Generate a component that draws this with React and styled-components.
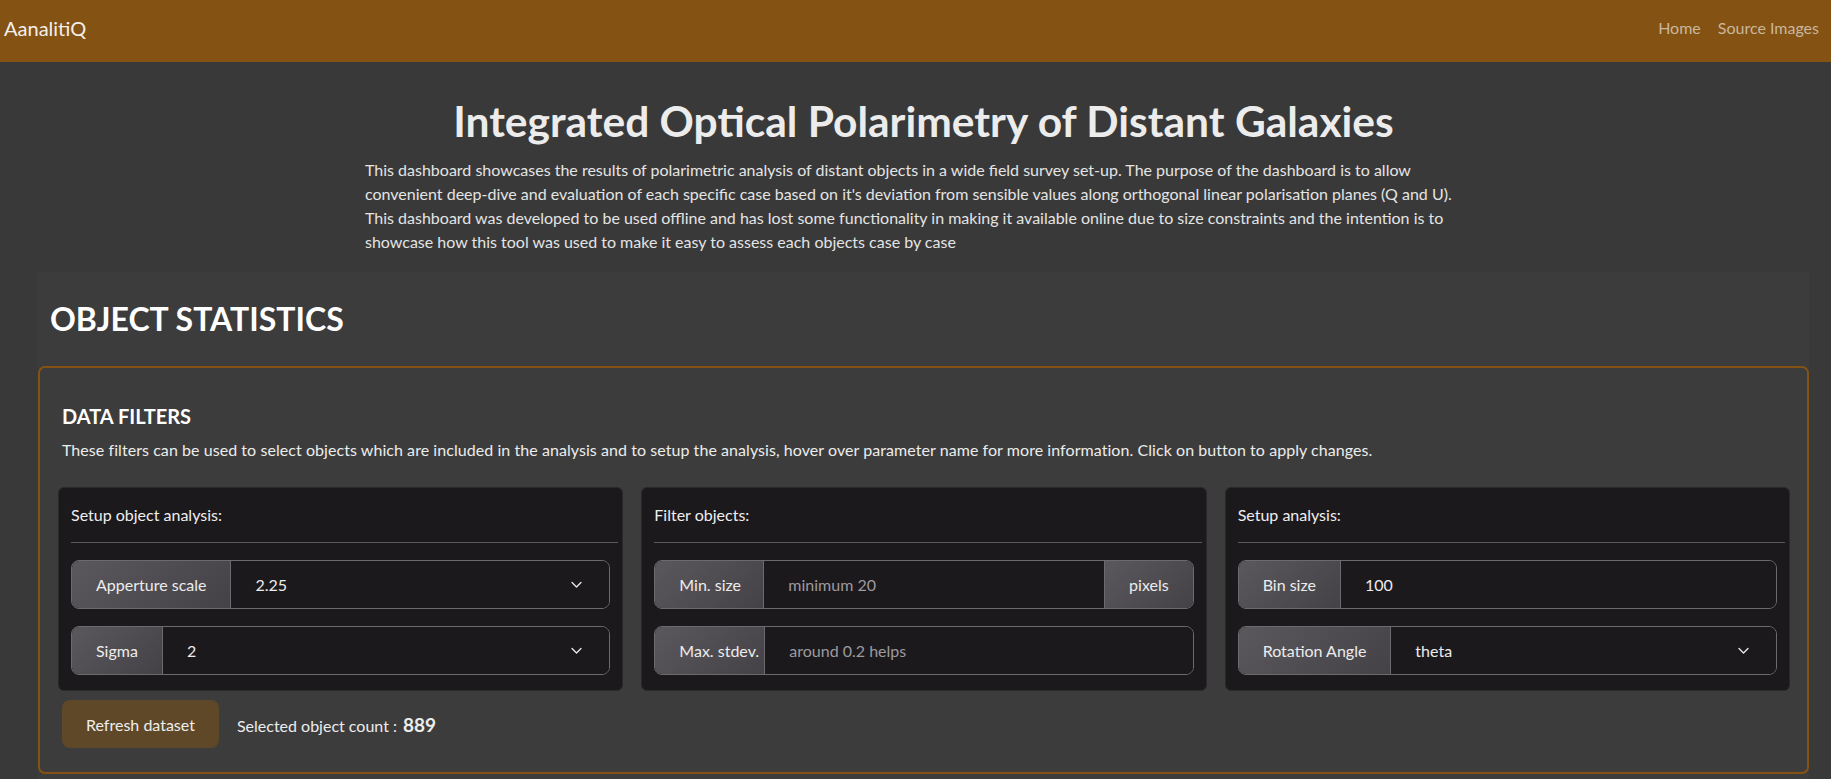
import styled, { createGlobalStyle } from 'styled-components'

const GlobalStyle = createGlobalStyle`
  body {
    margin: 0;
    background-color: #393939;
    color: #e9e9e9;
    font-family: Lato, "Liberation Sans", sans-serif;
  }
`

const Navbar = styled.nav`
  height: 62px;
  box-sizing: border-box;
  background-color: #845213;
  display: flex;
  align-items: center;
  justify-content: space-between;
  padding: 0 12px 7px 4px;
`

const Brand = styled.div`
  font-size: 20px;
  color: #f3f0ea;
`

const NavLinks = styled.div`
  display: flex;
  gap: 17px;
`

const NavLink = styled.a`
  font-size: 16px;
  color: #c9b79e;
  text-decoration: none;
`

const Main = styled.main`
  padding: 0 22px 0 38px;
`

const Title = styled.h1`
  margin: 35px 0 13px;
  font-size: 42.5px;
  line-height: 48px;
  font-weight: 700;
  text-align: center;
  color: #ececec;
`

const Intro = styled.p`
  margin: 0 0 18px 327px;
  font-size: 16px;
  line-height: 24px;
  color: #e4e4e4;
  white-space: nowrap;
`

const Section = styled.section`
  background-color: #3c3c3c;
  padding: 28px 0 20px;
`

const SectionTitle = styled.h2`
  margin: 0 0 28px;
  padding-left: 12px;
  font-size: 32px;
  line-height: 38px;
  font-weight: 700;
  color: #fff;
`

const FilterBox = styled.div`
  border: 2px solid #845213;
  border-radius: 7px;
  padding: 36px 17px 24px 18px;
`

const BoxTitle = styled.h5`
  margin: 0 0 10px 4px;
  font-size: 20px;
  line-height: 24px;
  font-weight: 700;
  color: #fff;
`

const BoxText = styled.p`
  margin: 0 0 25px 4px;
  font-size: 16px;
  line-height: 24px;
  letter-spacing: 0.06px;
  color: #ececec;
`

const CardRow = styled.div`
  display: grid;
  grid-template-columns: repeat(3, 1fr);
  gap: 18px;
`

const Card = styled.div`
  background-color: #1c191d;
  border: 1px solid #2b282c;
  border-radius: 6px;
  padding: 15px 12px 15px 12px;
`

const CardHeader = styled.div`
  font-size: 16px;
  line-height: 24px;
  color: #eeeeee;
  padding-bottom: 15px;
  margin-right: -8px;
  border-bottom: 1px solid #5a575b;
  margin-bottom: 17px;
`

const Group = styled.div`
  display: flex;
  height: 49px;
  box-sizing: border-box;
  border: 1px solid #6d6a6e;
  border-radius: 8px;
  overflow: hidden;
  & + & {
    margin-top: 17px;
  }
`

const Addon = styled.div`
  display: flex;
  align-items: center;
  flex-shrink: 0;
  box-sizing: border-box;
  width: ${({ $width }) => ($width ? `${$width}px` : 'auto')};
  padding: ${({ $width }) => ($width ? '0 0 0 24px' : '0 24px')};
  font-size: 16px;
  color: #ececec;
  background: linear-gradient(135deg, #5b585d, #454247);
  border-left: ${({ $end }) => ($end ? '1px solid #6d6a6e' : 'none')};
  border-right: ${({ $end }) => ($end ? 'none' : '1px solid #6d6a6e')};
  white-space: nowrap;
`

const Field = styled.div`
  flex: 1;
  display: flex;
  align-items: center;
  justify-content: space-between;
  padding: 0 26px 0 24px;
  font-size: 16px;
  color: ${({ $placeholder }) => ($placeholder ? '#9c9a9d' : '#ececec')};
  background-color: #1c191d;
`

const Chevron = () => (
  <svg width="13" height="13" viewBox="0 0 16 16" fill="none">
    <path d="M2.5 5.5l5.5 5.5 5.5-5.5" stroke="#e6e6e6" strokeWidth="1.7" strokeLinecap="round" strokeLinejoin="round" />
  </svg>
)

const Footer = styled.div`
  display: flex;
  align-items: center;
  gap: 18px;
  margin: 9px 0 0 4px;
`

const RefreshButton = styled.button`
  height: 48px;
  padding: 0 24px;
  border: none;
  border-radius: 8px;
  background-color: #5f4828;
  color: #eeeeee;
  font-family: inherit;
  font-size: 16px;
  cursor: pointer;
`

const Count = styled.span`
  font-size: 16px;
  color: #ececec;
  b {
    font-size: 19px;
    margin-left: 6px;
  }
`

const InputGroup = ({ label, labelWidth, value, placeholder, select, unit }) => (
  <Group>
    <Addon $width={labelWidth}>{label}</Addon>
    <Field $placeholder={placeholder}>
      {value || placeholder}
      {select && <Chevron />}
    </Field>
    {unit && <Addon $end>{unit}</Addon>}
  </Group>
)

export default function App() {
  return (
    <>
      <GlobalStyle />
      <Navbar>
        <Brand>AanalitiQ</Brand>
        <NavLinks>
          <NavLink href="#">Home</NavLink>
          <NavLink href="#">Source Images</NavLink>
        </NavLinks>
      </Navbar>
      <Main>
        <Title>Integrated Optical Polarimetry of Distant Galaxies</Title>
        <Intro>
          This dashboard showcases the results of polarimetric analysis of distant objects in a wide field survey set-up. The purpose of the dashboard is to allow
          <br />
          convenient deep-dive and evaluation of each specific case based on it's deviation from sensible values along orthogonal linear polarisation planes (Q and U).
          <br />
          This dashboard was developed to be used offline and has lost some functionality in making it available online due to size constraints and the intention is to
          <br />
          showcase how this tool was used to make it easy to assess each objects case by case
        </Intro>
        <Section>
          <SectionTitle>OBJECT STATISTICS</SectionTitle>
          <FilterBox>
            <BoxTitle>DATA FILTERS</BoxTitle>
            <BoxText>
              These filters can be used to select objects which are included in the analysis and to setup the analysis, hover over parameter name for more information. Click on button to apply changes.
            </BoxText>
            <CardRow>
              <Card>
                <CardHeader>Setup object analysis:</CardHeader>
                <InputGroup label="Apperture scale" value="2.25" select />
                <InputGroup label="Sigma" value="2" select />
              </Card>
              <Card>
                <CardHeader>Filter objects:</CardHeader>
                <InputGroup label="Min. size" labelWidth={109} placeholder="minimum 20" unit="pixels" />
                <InputGroup label="Max. stdev." labelWidth={110} placeholder="around 0.2 helps" />
              </Card>
              <Card>
                <CardHeader>Setup analysis:</CardHeader>
                <InputGroup label="Bin size" value="100" />
                <InputGroup label="Rotation Angle" value="theta" select />
              </Card>
            </CardRow>
            <Footer>
              <RefreshButton>Refresh dataset</RefreshButton>
              <Count>
                Selected object count :<b>889</b>
              </Count>
            </Footer>
          </FilterBox>
        </Section>
      </Main>
    </>
  )
}
